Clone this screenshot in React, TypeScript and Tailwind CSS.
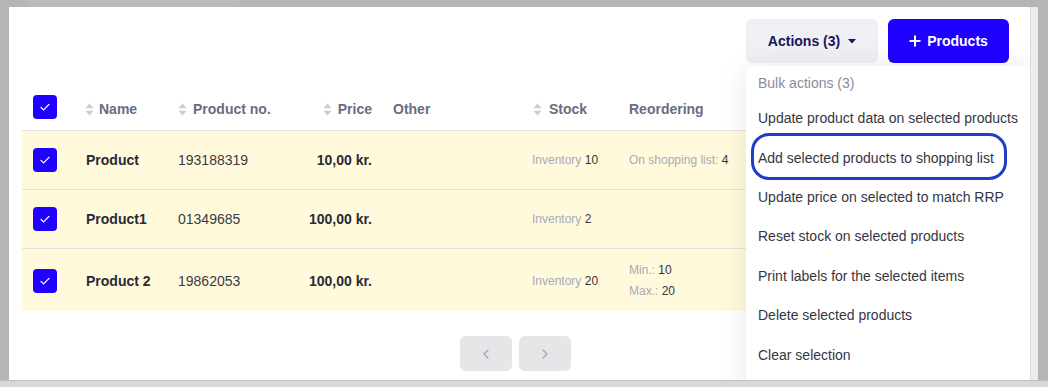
import React from "react";
import { ChevronLeft, ChevronRight } from "lucide-react";

function Check() {
  return (
    <div className="w-6 h-6 rounded-[4px] bg-[#2000ff] flex items-center justify-center">
      <svg width="14" height="14" viewBox="0 0 14 14">
        <path d="M3 7.4l2.6 2.5L11 4.4" fill="none" stroke="white" strokeWidth="1.3" strokeLinecap="round" strokeLinejoin="round" />
      </svg>
    </div>
  );
}

function Sort() {
  return (
    <svg width="9" height="13" viewBox="0 0 9 13" className="shrink-0">
      <path d="M4.5 0.5L8.5 5.3H0.5Z" fill="#cbcbd1" />
      <path d="M4.5 12.5L8.5 7.7H0.5Z" fill="#cbcbd1" />
    </svg>
  );
}

type Row = {
  name: string;
  no: string;
  price: string;
  inv: string;
  reorder: React.ReactNode;
};

const rows: Row[] = [
  {
    name: "Product",
    no: "193188319",
    price: "10,00 kr.",
    inv: "10",
    reorder: (
      <div className="text-[12px] leading-[21px]">
        <span className="text-[#a9a9b8]">On shopping list: </span>
        <span className="text-[#34343e]">4</span>
      </div>
    ),
  },
  { name: "Product1", no: "01349685", price: "100,00 kr.", inv: "2", reorder: null },
  {
    name: "Product 2",
    no: "19862053",
    price: "100,00 kr.",
    inv: "20",
    reorder: (
      <div className="text-[12px] leading-[21px]">
        <div>
          <span className="text-[#a9a9b8]">Min.: </span>
          <span className="text-[#34343e]">10</span>
        </div>
        <div>
          <span className="text-[#a9a9b8]">Max.: </span>
          <span className="text-[#34343e]">20</span>
        </div>
      </div>
    ),
  },
];

const menuItems = [
  "Update product data on selected products",
  "Add selected products to shopping list",
  "Update price on selected to match RRP",
  "Reset stock on selected products",
  "Print labels for the selected items",
  "Delete selected products",
  "Clear selection",
];

export default function App() {
  return (
    <div className="w-[1048px] h-[387px] bg-[#b4b5b4] flex flex-col overflow-hidden font-['Liberation_Sans',Arial,sans-serif]">
      {/* top strip */}
      <div className="h-[7px] shrink-0 flex pl-[27px]">
        <div className="w-[213px] h-full bg-[#b9bab9] rounded-b-[3px]" />
      </div>

      {/* middle */}
      <div className="flex h-[373px] shrink-0">
        <div className="w-[9px] shrink-0" />
        <div className="w-[1021px] shrink-0 bg-white relative overflow-hidden">
          {/* top buttons */}
          <div className="flex justify-end gap-[10px] pt-[12px] pr-[21px]">
            <div className="w-[132px] h-[44px] rounded-[6px] bg-[#f0eff4] flex items-center justify-center gap-[8px] text-[14px] font-bold text-[#16165e]">
              <span>Actions (3)</span>
              <svg width="8" height="5" viewBox="0 0 8 5">
                <path d="M0 0H8L4 4.5Z" fill="#16165e" />
              </svg>
            </div>
            <div className="w-[121px] h-[44px] rounded-[6px] bg-[#2000ff] flex items-center justify-center gap-[6px] text-[14px] font-bold text-white">
              <svg width="12" height="12" viewBox="0 0 12 12">
                <path d="M6 0.5V11.5M0.5 6H11.5" stroke="white" strokeWidth="2" />
              </svg>
              <span>Products</span>
            </div>
          </div>

          {/* table */}
          <div className="ml-[13px] mr-[21px] mt-[32px]">
            <div className="flex items-center h-[36px] pb-[6px] border-b border-[#e2e2e6] text-[14px] font-bold text-[#6b6b82]">
              <div className="w-[64px] pl-[11px] shrink-0 -mt-[6px]">
                <Check />
              </div>
              <div className="w-[92px] shrink-0 flex items-center gap-[5px] -ml-[1px]">
                <Sort />
                <span>Name</span>
              </div>
              <div className="w-[132px] shrink-0 flex items-center gap-[6px] ml-[1px]">
                <Sort />
                <span>Product no.</span>
              </div>
              <div className="w-[62px] shrink-0 flex items-center justify-end gap-[6px]">
                <Sort />
                <span>Price</span>
              </div>
              <div className="w-[21px] shrink-0" />
              <div className="w-[139px] shrink-0">Other</div>
              <div className="w-[97px] shrink-0 flex items-center gap-[7px] pl-[1px]">
                <Sort />
                <span>Stock</span>
              </div>
              <div className="flex-1">Reordering</div>
            </div>

            {rows.map((r, i) => (
              <div
                key={i}
                className={`flex items-center bg-[#fffadc] ${i < rows.length - 1 ? "min-h-[59px] py-[10px] border-b border-[#e2e2e2]" : "min-h-[62px] pt-[11px] pb-[9px]"}`}
              >
                <div className="w-[64px] pl-[11px] shrink-0">
                  <Check />
                </div>
                <div className="w-[92px] shrink-0 text-[14px] font-bold text-[#2a2a35]">{r.name}</div>
                <div className="w-[132px] shrink-0 text-[14px] text-[#3a3a44]">{r.no}</div>
                <div className="w-[62px] shrink-0 text-[14px] font-bold text-[#2a2a35] text-right whitespace-nowrap flex justify-end">
                  {r.price}
                </div>
                <div className="w-[21px] shrink-0" />
                <div className="w-[139px] shrink-0" />
                <div className="w-[97px] shrink-0 text-[12px]">
                  <span className="text-[#a9a9b8]">Inventory </span>
                  <span className="text-[#34343e]">{r.inv}</span>
                </div>
                <div className="flex-1">{r.reorder}</div>
              </div>
            ))}

            {/* pagination */}
            <div className="flex justify-center gap-[7px] mt-[25px]">
              <div className="w-[52px] h-[35px] rounded-[6px] bg-[#e6e6e8] flex items-center justify-center text-[#a4a4c4]">
                <ChevronLeft size={16} strokeWidth={2} />
              </div>
              <div className="w-[52px] h-[35px] rounded-[6px] bg-[#e6e6e8] flex items-center justify-center text-[#a4a4c4]">
                <ChevronRight size={16} strokeWidth={2} />
              </div>
            </div>
          </div>

          {/* dropdown menu */}
          <div className="absolute left-[737px] top-[59px] w-[284px] h-[340px] bg-white rounded-[6px] shadow-[0_0_28px_rgba(0,0,0,0.09)] text-[14px]">
            <div className="h-[33px] pt-[1px] flex items-center pl-[12px] text-[#8b8b9c]">Bulk actions (3)</div>
            {menuItems.map((m) => (
              <div key={m} className="h-[39.4px] flex items-center pl-[12px] text-[#363642] whitespace-nowrap">
                {m}
              </div>
            ))}
          </div>

          {/* highlight ring */}
          <div className="absolute left-[742px] top-[126px] w-[256px] h-[47px] border-[3px] border-[#1e3ec6] rounded-[18px]" />
        </div>
        <div className="w-[8px] shrink-0 bg-[#ececef] border-l border-[#dcdce0]" />
        <div className="flex-1" />
      </div>

      {/* bottom strip */}
      <div className="flex-1 bg-[#d9d9d9] border-t border-[#bdbdbd]" />
    </div>
  );
}
